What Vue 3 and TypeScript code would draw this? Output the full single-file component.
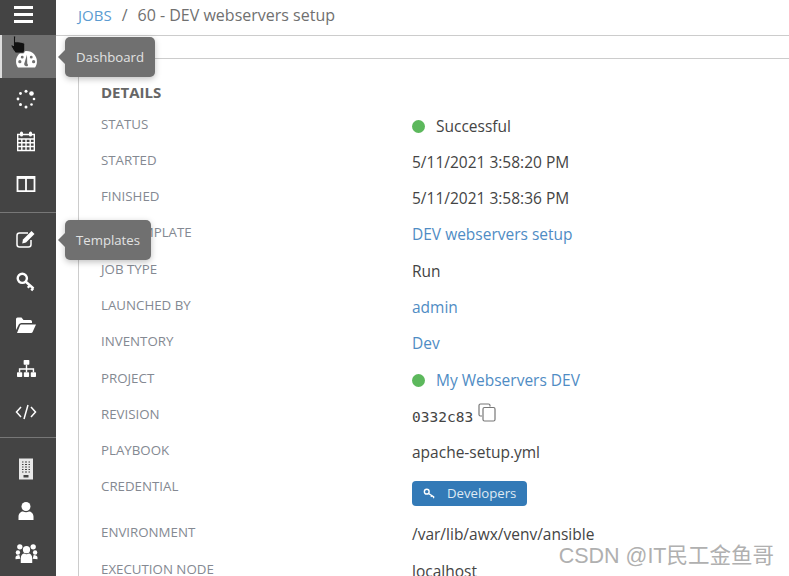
<script setup lang="ts">
type Row = { label: string; value: string; kind?: "link" | "status" | "project" | "mono" | "tag" };

const rows: Row[] = [
  { label: "STATUS", value: "Successful", kind: "status" },
  { label: "STARTED", value: "5/11/2021 3:58:20 PM" },
  { label: "FINISHED", value: "5/11/2021 3:58:36 PM" },
  { label: "JOB TEMPLATE", value: "DEV webservers setup", kind: "link" },
  { label: "JOB TYPE", value: "Run" },
  { label: "LAUNCHED BY", value: "admin", kind: "link" },
  { label: "INVENTORY", value: "Dev", kind: "link" },
  { label: "PROJECT", value: "My Webservers DEV", kind: "project" },
  { label: "REVISION", value: "0332c83", kind: "mono" },
  { label: "PLAYBOOK", value: "apache-setup.yml" },
  { label: "CREDENTIAL", value: "Developers", kind: "tag" },
  { label: "ENVIRONMENT", value: "/var/lib/awx/venv/ansible" },
  { label: "EXECUTION NODE", value: "localhost" },
];
</script>

<template>
  <div class="page">
    <nav class="side">
      <div class="burger"><i></i><i></i><i></i></div>
      <div class="group">
        <div class="item active">
          <svg class="gauge" viewBox="0 0 24 20" width="23" height="19"><path fill="#fff" fill-rule="evenodd" d="M12 1C5.600 1 1 6 1 12c0 2.500.8 4.700 2 6.500h18c1.200-1.800 2-4 2-6.500C23 6 18.400 1 12 1ZM5 14a1.700 1.700 0 1 1 0-3.400A1.700 1.700 0 0 1 5 14Zm2.500-5a1.500 1.500 0 1 1 0-3A1.500 1.500 0 0 1 7.500 9Zm6 7.500a2.400 2.400 0 0 1-4-1.800l3-9.700.3 9.300a2.400 2.400 0 0 1 .7 2.200ZM17 9a1.500 1.500 0 1 1 0-3 1.500 1.500 0 0 1 0 3Zm2.500 5a1.700 1.700 0 1 1 0-3.400 1.700 1.700 0 0 1 0 3.400Z"/></svg>
        </div>
        <div class="item">
          <svg viewBox="0 0 20 20" width="20" height="20" fill="#fff"><circle cx="10" cy="2.300" r="1.500"/><circle cx="15.500" cy="4.500" r="2.300"/><circle cx="18" cy="10" r="1.300"/><circle cx="15.500" cy="15.500" r="1.300"/><circle cx="10" cy="18" r="1.500"/><circle cx="4.500" cy="15.500" r="1.500"/><circle cx="2" cy="10" r="1.400"/><circle cx="4.500" cy="4.500" r="1.400"/></svg>
        </div>
        <div class="item">
          <svg viewBox="0 0 20 22" width="20" height="22"><path fill="none" stroke="#fff" stroke-width="1.400" d="M1.700 4.500h16.600v16H1.700zM1.700 9h16.600M1.700 12.700h16.600M1.700 16.500h16.600M5.800 9v11.500M10 9v11.500M14.200 9v11.500"/><rect x="4" y="1.500" width="3" height="5" rx="1.500" fill="#fff"/><rect x="13" y="1.500" width="3" height="5" rx="1.500" fill="#fff"/></svg>
        </div>
        <div class="item">
          <svg viewBox="0 0 20 18" width="20" height="18"><path fill="none" stroke="#fff" stroke-width="1.800" d="M1.500 1.900h17v14.200h-17zM10 1.900v14.200"/><path stroke="#fff" stroke-width="1.800" d="M1.500 3h17"/></svg>
        </div>
      </div>
      <div class="group mid">
        <div class="item">
          <svg viewBox="0 0 22 20" width="22" height="20"><path fill="none" stroke="#fff" stroke-width="1.500" d="M16 11v4.500a2.500 2.500 0 0 1-2.500 2.500h-9A2.500 2.500 0 0 1 2 15.500v-9A2.500 2.500 0 0 1 4.500 4H13"/><path fill="#fff" d="M8 10.500 16.500 2l3 3-8.500 8.500-3.800.9.800-3.900Z"/></svg>
        </div>
        <div class="item">
          <svg viewBox="0 0 20 20" width="20" height="20"><circle cx="6.300" cy="6.300" r="4.600" fill="none" stroke="#fff" stroke-width="2.400"/><path fill="none" stroke="#fff" stroke-width="2.400" d="m9.500 9.500 8 7M14 13.300l-2.200 2.400M17.200 16.200l-1.900 2.300"/></svg>
        </div>
        <div class="item">
          <svg viewBox="0 0 22 18" width="22" height="18" fill="#fff"><path d="M1 14V3a1.500 1.500 0 0 1 1.500-1.500h4L8.500 4h7A1.500 1.500 0 0 1 17 5.500V7H6.500a3 3 0 0 0-2.700 1.600L1 14Z"/><path d="M5 9.500A1.500 1.500 0 0 1 6.300 8.500H21l-3.500 7.700a1.500 1.500 0 0 1-1.300.8H2Z"/></svg>
        </div>
        <div class="item">
          <svg viewBox="0 0 22 20" width="21" height="19" fill="#fff"><rect x="8" y="1" width="6" height="5" rx=".8"/><rect x="1" y="14" width="5.500" height="5" rx=".8"/><rect x="8.200" y="14" width="5.500" height="5" rx=".8"/><rect x="15.500" y="14" width="5.500" height="5" rx=".8"/><path fill="none" stroke="#fff" stroke-width="1.500" d="M11 6v8M3.700 14v-3.500h14.600V14"/></svg>
        </div>
        <div class="item">
          <svg viewBox="0 0 22 16" width="22" height="16" fill="none" stroke="#fff" stroke-width="1.500"><path d="M6 3 1.500 8 6 13M16 3l4.500 5-4.500 5M13 1 9 15"/></svg>
        </div>
      </div>
      <div class="group last">
        <div class="item">
          <svg viewBox="0 0 16 22" width="16" height="22"><path fill="#e8e8e8" fill-rule="evenodd" d="M1 .5h14v21H1Zm3 3v1h1.500v-1Zm3 0v1h2v-1Zm3.500 0v1H12v-1ZM4 6v1h1.500V6Zm3 0v1h2V6Zm3.500 0v1H12V6ZM4 8.500v1h1.500v-1Zm3 0v1h2v-1Zm3.500 0v1H12v-1ZM4 11v1h1.500v-1Zm3 0v1h2v-1Zm3.500 0v1H12v-1ZM4 13.500v1h1.500v-1Zm3 0v1h2v-1Zm3.500 0v1H12v-1ZM5.500 17v2.500h5V17Z"/></svg>
        </div>
        <div class="item">
          <svg viewBox="0 0 16 20" width="16" height="20" fill="#fff"><circle cx="8" cy="5.500" r="4.500"/><path d="M.5 19v-3.500C.5 12.500 3 10.500 5 10.500c1.800 1 4.200 1 6 0 2 0 4.500 2 4.500 5V19Z"/></svg>
        </div>
        <div class="item">
          <svg viewBox="0 0 24 22" width="23" height="21" fill="#fff"><circle cx="12" cy="7" r="3.800"/><circle cx="5" cy="4" r="2.800"/><circle cx="19" cy="4" r="2.800"/><circle cx="3" cy="10" r="2.300"/><circle cx="21" cy="10" r="2.300"/><path d="M6 21v-5c0-3 2-5 3.500-5 1.500 1 3.500 1 5 0 1.500 0 3.500 2 3.500 5v5Z"/><path d="M.5 17v-2c0-1.500 1.500-2.500 4-2.500l1 4ZM23.500 17v-2c0-1.500-1.500-2.500-4-2.500l-1 4Z"/></svg>
        </div>
      </div>
    </nav>

    <main class="main">
      <header class="crumbs">
        <a>JOBS</a><span class="sep">/</span><span class="current">60 - DEV webservers setup</span>
      </header>
      <section class="panel">
        <h2>DETAILS</h2>
        <div v-for="row in rows" :key="row.label" class="row" :class="{ tall: row.kind === 'tag' }">
          <div class="label">{{ row.label }}</div>
          <div class="value">
            <template v-if="row.kind === 'status'">
              <i class="dot"></i><span>{{ row.value }}</span>
            </template>
            <a v-else-if="row.kind === 'link'">{{ row.value }}</a>
            <template v-else-if="row.kind === 'project'">
              <i class="dot"></i><a>{{ row.value }}</a>
            </template>
            <template v-else-if="row.kind === 'mono'">
              <span class="mono">{{ row.value }}</span>
              <svg class="copy" viewBox="0 0 18 19" width="18" height="19" fill="none" stroke="#777" stroke-width="1.200"><path d="M12 3.500V2.500A1.500 1.500 0 0 0 10.500 1h-8A1.500 1.500 0 0 0 1 2.500v9A1.500 1.500 0 0 0 2.500 13H4"/><rect x="5" y="4.500" width="12" height="13.500" rx="1.500"/></svg>
            </template>
            <span v-else-if="row.kind === 'tag'" class="tag">
              <svg viewBox="0 0 14 12" width="13" height="11" fill="none" stroke="#fff" stroke-width="1.500"><circle cx="4" cy="4" r="2.600"/><path d="m6 6 6 4M9.500 8.300l-1 1.200M12 10l-1 1"/></svg>
              {{ row.value }}
            </span>
            <template v-else>{{ row.value }}</template>
          </div>
        </div>
      </section>
    </main>

    <div class="tip tip-dash">Dashboard</div>
    <div class="tip tip-tpl">Templates</div>
    <svg class="cursor" viewBox="0 0 18 20" width="18" height="20"><path fill="#111" stroke="#777" stroke-width=".8" d="M3.500 1.500c1-1 2-.5 2 .8V7l1.500-.3 1.500.2 1.500.2 1.500.3 2 .4 1.200 1.300V15l-1 3H5.500L3 14.500 1 11c0-1 1-1.300 2-.8l.5.8Z"/></svg>
    <div class="mark">CSDN @IT民工金鱼哥</div>
  </div>
</template>

<style scoped>
.page { position: relative; display: flex; width: 789px; height: 576px; overflow: hidden; background: #fff; font-family: "Open Sans", "Noto Sans", sans-serif; color: #444; }
.side { flex: none; width: 56px; height: 576px; background: #444; }
.burger { display: flex; flex-direction: column; align-items: center; gap: 4px; height: 35px; padding: 6px 9px 0 0; box-sizing: border-box; }
.burger i { display: block; width: 19px; height: 3px; background: #fff; }
.group { border-bottom: 1px solid #777; padding-bottom: 7px; }
.group.mid { padding: 4.400px 0 3.400px; }
.group.mid .item { height: 43.200px; }
.group.last { border-bottom: 0; padding-top: 10px; }
.item { display: flex; align-items: center; justify-content: center; height: 42.500px; padding-right: 4px; box-sizing: border-box; }
.item.active { background: #707070; border-left: 2px solid #ddd; padding-right: 6px; }
.gauge { margin-top: 7px; }
.main { flex: 1; min-width: 0; }
.crumbs { display: flex; align-items: center; height: 36px; padding: 0 0 6px 22px; box-sizing: border-box; border-bottom: 1px solid #ccc; font-size: 16px; color: #707070; }
.crumbs a { color: #5b9bd1; font-size: 15px; }
.sep { margin: 0 10px; }
.panel { margin: 22px 0 0 22px; padding: 24px 0 0 22px; border-top: 1px solid #ccc; border-left: 1px solid #ccc; }
h2 { margin: 0 0 13.500px; font-size: 15px; line-height: 19px; font-weight: 700; color: #666; }
.row { display: flex; height: 36.300px; line-height: 19px; }
.row.tall { height: 46px; }
.label { width: 311px; flex: none; margin-top: -1px; font-size: 13.300px; color: #848992; }
.value { display: flex; align-items: flex-start; font-size: 15.500px; line-height: 21px; color: #444; }
.value a { color: #4f8cc4; }
.dot { width: 13px; height: 13px; margin: 4px 11px 0 0; border-radius: 50%; background: #5cb85c; }
.mono { font-family: "DejaVu Sans Mono", monospace; font-size: 14.500px; line-height: 23px; }
.copy { margin: -3px 0 0 5px; }
.tag { display: flex; align-items: center; gap: 11px; height: 25px; margin-top: 3px; padding: 0 11px; border-radius: 4px; background: #337ab7; font-size: 13.200px; color: #dfe9f3; }
.tip { position: absolute; display: flex; align-items: center; padding: 0 11px; border-radius: 5px; background: #707070; box-shadow: 0 2px 6px rgba(0, 0, 0, .25); font-size: 13.200px; color: #e2e2e2; }
.tip::before { content: ""; position: absolute; left: -7px; top: 50%; margin-top: -7px; border: 7px solid transparent; border-left: 0; border-right-color: #707070; }
.tip-dash { left: 65px; top: 37px; height: 40px; }
.tip-tpl { left: 65px; top: 220px; height: 40px; }
.cursor { position: absolute; left: 10px; top: 35px; }
.mark { position: absolute; right: 15px; bottom: 7px; font-family: "Liberation Sans", "Noto Sans CJK SC", sans-serif; font-size: 21.500px; color: #b0b0b0; }
</style>
